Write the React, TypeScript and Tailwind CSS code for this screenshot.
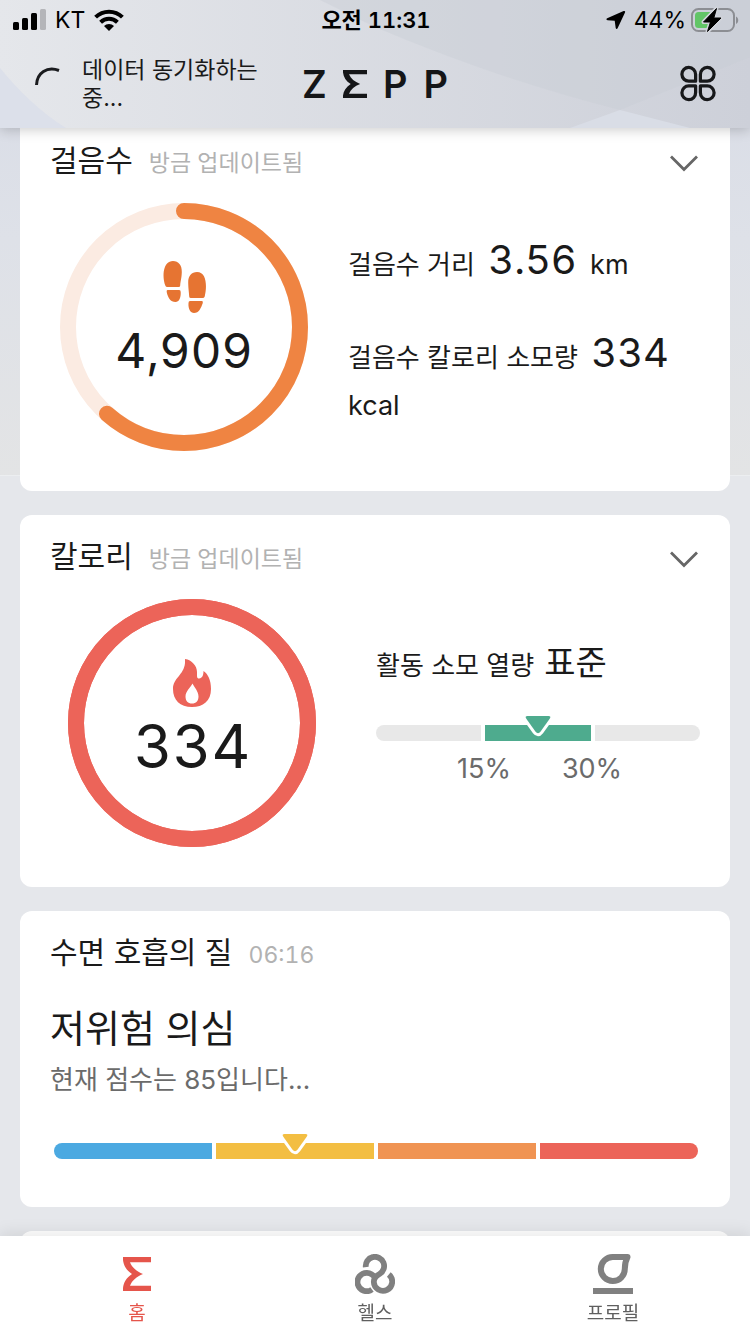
import React from "react";

function StatusBar() {
  return (
    <div className="grid h-10 grid-cols-3 items-center pl-3 pr-[10px] text-[23px] leading-10 text-black">
      <div className="flex items-center gap-[9px]">
        <svg width="34" height="22" viewBox="0 0 34 22" aria-hidden="true">
          <rect x="1" y="13" width="6" height="8" rx="1.5" />
          <rect x="10" y="9" width="6" height="12" rx="1.5" />
          <rect x="19" y="4" width="6" height="17" rx="1.5" />
          <rect x="28" y="0" width="6" height="21" rx="1.5" fill="#b4b5b9" />
        </svg>
        <span>KT</span>
        <svg width="30" height="22" viewBox="0 0 30 22" aria-hidden="true">
          <g fill="none" stroke="#000" strokeWidth="4">
            <path d="M1.6 8.2a19 19 0 0 1 26.8 0" />
            <path d="M6.6 13.2a12 12 0 0 1 16.8 0" />
          </g>
          <path d="M15 22l-5-5a7 7 0 0 1 10 0z" />
        </svg>
      </div>
      <div className="text-center text-[22px] font-semibold tabular-nums">오전 11:31</div>
      <div className="flex items-center justify-end gap-1">
        <svg width="20" height="20" viewBox="0 0 20 20" className="mr-1" aria-hidden="true">
          <path d="M17.6 1.1L1.2 8.2C-.1 8.8.2 10 1.500 10.200L8.700 10.700L9.700 18C9.900 19.300 11.100 19.500 11.600 18.300L19 2.500C19.500 1.300 18.800.6 17.600 1.100Z" />
        </svg>
        <span>44%</span>
        <svg width="50" height="28" viewBox="0 0 50 28" aria-hidden="true">
          <rect x="2" y="3" width="42" height="22" rx="6.5" fill="none" stroke="#8c8e93" strokeWidth="2" />
          <path d="M8.5 6H20V22H8.5A3.500 3.500 0 0 1 5 18.500V9.500A3.500 3.500 0 0 1 8.500 6Z" fill="#62c567" />
          <path d="M46 10.500c3 1.500 3 6 0 7.500z" fill="#8c8e93" />
          <path
            d="M26.500 2.500L13.500 16H20.500L17.500 25.500L31 12H23.800Z"
            stroke="#d0d3da"
            strokeWidth="4"
            strokeLinejoin="round"
          />
          <path d="M26.500 2.500L13.500 16H20.500L17.500 25.500L31 12H23.800Z" stroke="#000" strokeWidth="1" strokeLinejoin="round" />
        </svg>
      </div>
    </div>
  );
}

function SigmaMark({ className }: { className: string }) {
  return (
    <svg viewBox="0 0 28 34" preserveAspectRatio="none" className={className} fill="currentColor" aria-hidden="true">
      <path d="M0 0H28V5.200H7C9 10.500 13.500 14.300 20 17C13.500 19.700 9 23.500 7 28.800H28V34H0V31C.6 25.500 3.500 20.500 9 17C3.500 13.500 .6 8.500 0 3Z" />
    </svg>
  );
}

function Header() {
  return (
    <header className="relative z-10 bg-gradient-to-r from-[#e5e7eb] to-[#cdd0d9] shadow-[0_2px_12px_rgba(0,0,0,0.2)]">
      <svg className="absolute inset-0 h-full w-full" viewBox="0 0 750 128" preserveAspectRatio="none" aria-hidden="true">
        <path d="M375 27Q500 80 620 110L750 57V0H320Z" fill="#c9ccd4" fillOpacity=".4" />
        <path d="M570 128L620 110L690 128Z" fill="#d9dde6" />
        <path d="M0 68C18 90 40 112 66 128H0Z" fill="#dce0ea" />
      </svg>
      <div className="relative">
        <StatusBar />
        <div className="grid h-22 grid-cols-[1fr_auto_1fr] items-center px-8">
          <div className="flex items-center gap-5">
            <svg width="30" height="40" viewBox="0 0 30 40" fill="none" stroke="#1a1b1e" strokeWidth="3" aria-hidden="true">
              <path d="M4.500 21C5 9 15 2 27 6.500" />
            </svg>
            <p className="w-48 text-[23px] leading-7">데이터 동기화하는 중...</p>
          </div>
          <h1 className="flex items-center gap-4 text-[38px] leading-none font-semibold text-[#151618]">
            <span>Z</span>
            <SigmaMark className="h-7 w-6" />
            <span>P</span>
            <span>P</span>
          </h1>
          <button type="button" aria-label="메뉴" className="justify-self-end">
            <svg width="40" height="40" viewBox="-1 -0.5 42 42" fill="none" stroke="#17181a" strokeWidth="3.4" strokeLinejoin="round" aria-hidden="true">
              <path d="M17.500 17.500H10.500A7.200 7.200 0 1 1 17.500 10.500Z" />
              <path d="M22.500 17.500H29.500A7.200 7.200 0 1 0 22.500 10.500Z" />
              <path d="M17.500 22.500H10.500A7.200 7.200 0 1 0 17.500 29.500Z" />
              <path d="M22.500 22.500H29.500A7.200 7.200 0 1 1 22.500 29.500Z" />
            </svg>
          </button>
        </div>
      </div>
    </header>
  );
}

function CardHeader({ title, note, expandable }: { title: string; note: string; expandable?: boolean }) {
  return (
    <div className="flex h-11 items-center justify-between">
      <div className="flex items-baseline gap-4">
        <h2 className="text-[30px] leading-11">{title}</h2>
        <span className="text-[23px] text-[#b2b2b2] tabular-nums">{note}</span>
      </div>
      {expandable && (
        <button type="button" aria-label={title + " 펼치기"} className="mt-1.5">
          <svg width="32" height="20" viewBox="0 0 32 20" fill="none" stroke="#666" strokeWidth="2.8" aria-hidden="true">
            <path d="M3 3.500L16 16.500L29 3.500" />
          </svg>
        </button>
      )}
    </div>
  );
}

type RingProps = { color: string; track: string; ratio: number; children: React.ReactNode };

function Ring({ color, track, ratio, children }: RingProps) {
  const length = 2 * Math.PI * 116;
  return (
    <div className="relative size-[248px] shrink-0">
      <svg viewBox="0 0 248 248" className="size-full -rotate-90" fill="none" strokeWidth="16" aria-hidden="true">
        <circle cx="124" cy="124" r="116" stroke={track} />
        <circle
          cx="124"
          cy="124"
          r="116"
          stroke={color}
          strokeLinecap="round"
          strokeDasharray={`${length * ratio} ${length}`}
        />
      </svg>
      <div className="absolute inset-0 flex flex-col items-center">{children}</div>
    </div>
  );
}

function Pointer({ fill }: { fill: string }) {
  const shape = "M5.500 3H26.500Q29.500 3 27.700 5.800L18.600 18.500Q16 22 13.400 18.500L4.300 5.800Q2.500 3 5.500 3Z";
  return (
    <svg
      width="32"
      height="26"
      viewBox="0 0 32 26"
      className="absolute -top-3 left-1/2 -translate-x-1/2"
      aria-hidden="true"
    >
      <path d={shape} fill="#fff" stroke="#fff" strokeWidth="6" />
      <path d={shape} fill={fill} />
    </svg>
  );
}

function StepsCard() {
  return (
    <section className="rounded-b-xl bg-white px-[30px] pt-[10px] pb-10">
      <CardHeader title="걸음수" note="방금 업데이트됨" expandable />
      <div className="mt-[21px] flex gap-10 pl-[10px]">
        <Ring color="#ef8442" track="#fbebe2" ratio={0.615}>
          <svg width="44" height="54" viewBox="-1 0 44 54" className="mt-[57px]" fill="#e67432" aria-hidden="true">
            <path d="M10 1C15.500 1 19 5 18.800 12C18.700 18 17.500 21 17.200 25.500Q17.200 27 15.500 27H4.500Q2.700 27 2.300 25.500C-1 16 0 1 10 1Z" />
            <path d="M4.500 30H16.200Q17.700 30 17.700 32C18 38 16 42 12.500 42C7.500 42 5 38 3.700 32Q3.400 30 4.500 30Z" />
            <path d="M34 12C28.500 12 25 16 25.200 23C25.300 29 26 32 26.200 36.500Q26.200 38 28 38H39.500Q41.300 38 41.700 36.500C44 27 44 12 34 12Z" />
            <path d="M39 41H27Q25.500 41 25.500 43C25 49 27.500 53 31 53C36 53 38 48 39.800 43Q40.100 41 39 41Z" />
          </svg>
          <span className="text-5xl leading-[74px] tabular-nums">4,909</span>
        </Ring>
        <div className="flex flex-col gap-10 pt-[33px] text-[26px] leading-[48px]">
          <p>
            걸음수 거리 <span className="mx-1.5 text-[40px] tabular-nums">3.56</span>{" "}
            <span className="text-[27px]">km</span>
          </p>
          <p>
            걸음수 칼로리 소모량 <span className="ml-1.5 text-[40px] tabular-nums">334</span>{" "}
            <span className="text-[27px]">kcal</span>
          </p>
        </div>
      </div>
    </section>
  );
}

function CaloriesCard() {
  return (
    <section className="rounded-xl bg-white px-[30px] pt-[19px] pb-10">
      <CardHeader title="칼로리" note="방금 업데이트됨" expandable />
      <div className="mt-[21px] flex gap-[60px] pl-[18px]">
        <Ring color="#ec6459" track="#ec6459" ratio={1}>
          <svg width="40" height="50" viewBox="0 0 40 50" className="mt-[59px]" fill="#ec6459" fillRule="evenodd" aria-hidden="true">
            <path d="M13 1C20 2 25 8 25 14V18C25 22 30 21 31 17Q31.500 15 31.500 13C36 16 39 22 39 31C39 43 31 49 20 49C8 49 1 42 1 31C1 20 12 17 13 5ZM20.500 25.500C19 29 13.500 33 13.500 38.500C13.500 43 16 45.500 20 45.500C24 45.500 26.500 43 26.500 38.500C26.500 33 22 29 20.500 25.500Z" />
          </svg>
          <span className="text-[60px] leading-[76px] tabular-nums">334</span>
        </Ring>
        <div className="flex-1 pt-10">
          <p className="flex items-baseline gap-[10px] text-[26px] leading-[48px]">
            활동 소모 열량 <span className="text-[34px]">표준</span>
          </p>
          <div className="mt-[35px] grid grid-cols-3 gap-1">
            <span className="h-4 rounded-l-full bg-[#e8e8e8]" />
            <span className="relative h-4 bg-[#4eab8e]">
              <Pointer fill="#4eab8e" />
            </span>
            <span className="h-4 rounded-r-full bg-[#e8e8e8]" />
          </div>
          <div className="mt-2 grid grid-cols-[1fr_2fr_2fr_1fr] text-center text-[27px] leading-10 text-[#6b6b6b]">
            <span className="col-start-2">15%</span>
            <span>30%</span>
          </div>
        </div>
      </div>
    </section>
  );
}

function SleepCard() {
  return (
    <section className="rounded-xl bg-white px-[30px] pt-[19px] pb-12">
      <CardHeader title="수면 호흡의 질" note="06:16" />
      <p className="mt-6 text-[38px] leading-[60px]">저위험 의심</p>
      <p className="text-[26px] leading-[44px] text-[#6b6b6b]">현재 점수는 85입니다...</p>
      <div className="mt-[41px] grid grid-cols-4 gap-1 pr-0.5 pl-1">
        <span className="h-4 rounded-l-full bg-[#4ba9e1]" />
        <span className="relative h-4 bg-[#f3be42]">
          <Pointer fill="#f3be42" />
        </span>
        <span className="h-4 bg-[#f09453]" />
        <span className="h-4 rounded-r-full bg-[#ec6459]" />
      </div>
    </section>
  );
}

function TabBar() {
  return (
    <nav className="fixed inset-x-0 bottom-0 z-10 flex justify-around bg-white px-[18px] pt-[18px] pb-1.5 text-[19px] leading-7 text-[#5f5f5f] shadow-[0_-2px_16px_rgba(0,0,0,0.1)]">
      <a href="#home" aria-current="page" className="flex w-24 flex-col items-center gap-1.5 text-[#e5554b]">
        <span className="flex h-10 items-center">
          <SigmaMark className="h-[34px] w-7" />
        </span>
        홈
      </a>
      <a href="#health" className="flex w-24 flex-col items-center gap-1.5">
        <svg width="40" height="40" viewBox="0 0 40 40" fill="none" stroke="#808080" strokeWidth="5.8" aria-hidden="true">
          <path d="M10.800 13.200A9.200 9.200 0 1 1 24.500 20Q18.800 23 18.800 28A9.200 9.200 0 1 0 33.800 20.500" />
          <path d="M17 35.500A9.200 9.200 0 1 1 12 18.800Q17 19 20 23.500" />
        </svg>
        헬스
      </a>
      <a href="#profile" className="flex w-24 flex-col items-center gap-1.5">
        <svg width="40" height="40" viewBox="0 0 40 40" fill="none" stroke="#808080" strokeWidth="6" strokeLinejoin="round" aria-hidden="true">
          <path d="M20 3H34.500Q31.800 8 31.800 15A12 12 0 1 1 20 3Z" />
          <path d="M0 37H40" />
        </svg>
        프로필
      </a>
    </nav>
  );
}

export default function App() {
  return (
    <div className="relative min-h-screen bg-[#e5e7eb] font-['Inter','Noto_Sans_CJK_KR',sans-serif] text-[#1a1a1a]">
      <div className="absolute inset-x-0 top-0 h-[476px] border-b border-[#eceef0] bg-gradient-to-b from-[#d7dbe6] via-[#dee1e8] to-[#e3e4e5]" />
      <Header />
      <main className="relative flex flex-col gap-6 px-5">
        <StepsCard />
        <CaloriesCard />
        <SleepCard />
        <section className="h-24 rounded-xl bg-white" />
      </main>
      <TabBar />
    </div>
  );
}
